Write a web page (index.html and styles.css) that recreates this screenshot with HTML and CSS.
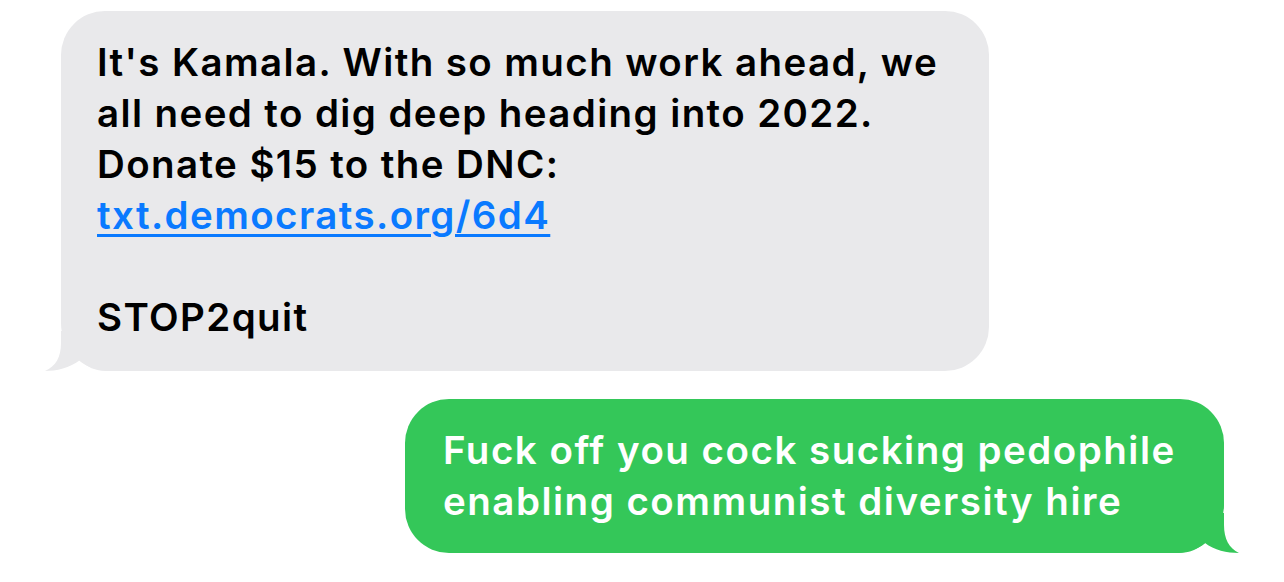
FILE: index.html
```html
<!DOCTYPE html>
<html>
<head>
<meta charset="utf-8">
<link rel="stylesheet" href="styles.css">
</head>
<body>
<div class="thread">
  <div class="bubble in">
    <p class="msg">It's Kamala. With so much work ahead, we<br>all need to dig deep heading into 2022.<br>Donate $15 to the DNC:<br><a class="link" href="#">txt.democrats.org/6d4</a><br><br>STOP2quit</p>
    <svg class="tail tail-in" width="70" height="40" viewBox="0 0 70 40"><path d="M17,0 L17,12 C17,26 12,35 1,40 C12,40 26,37 36,29 C43,36 51,40 63,40 L70,40 L70,0 Z"/></svg>
  </div>
  <div class="bubble out">
    <p class="msg">Fuck off you cock sucking pedophile<br>enabling communist diversity hire</p>
    <svg class="tail tail-out" width="70" height="40" viewBox="0 0 70 40"><path d="M54,0 L54,12 C54,26 59,35 69,40 C57,40 44,37 35,30 C28,36 20,40 8,40 L0,40 L0,0 Z"/></svg>
  </div>
</div>
</body>
</html>
```

FILE: styles.css
```css
html, body {
  margin: 0;
  padding: 0;
  background: #ffffff;
}
.thread {
  display: flex;
  flex-direction: column;
  gap: 28px;
  padding-top: 11px;
}
.bubble {
  position: relative;
  box-sizing: border-box;
  border-radius: 44px;
}
.in {
  align-self: flex-start;
  margin-left: 61px;
  width: 928px;
  height: 360px;
  background: #e9e9eb;
  color: #000;
  padding: 26px 20px 0 36px;
  border-bottom-left-radius: 48px;
}
.out {
  align-self: flex-end;
  margin-right: 60px;
  width: 819px;
  height: 154px;
  background: #34c759;
  color: #fff;
  padding: 26px 20px 0 38px;
  border-bottom-right-radius: 48px;
}
.msg {
  margin: 0;
  font-family: Inter, "Liberation Sans", sans-serif;
  font-weight: 600;
  font-size: 38.5px;
  line-height: 51px;
  letter-spacing: 1.4px;
  white-space: nowrap;
}
.out .msg {
  letter-spacing: 1.5px;
}
.link {
  color: #0a7aff;
  text-decoration: underline;
  text-decoration-thickness: 3px;
  text-underline-offset: 5px;
}
.tail {
  position: absolute;
  bottom: 0;
}
.tail-in {
  left: -17px;
  fill: #e9e9eb;
}
.tail-out {
  right: -16px;
  fill: #34c759;
}
```
